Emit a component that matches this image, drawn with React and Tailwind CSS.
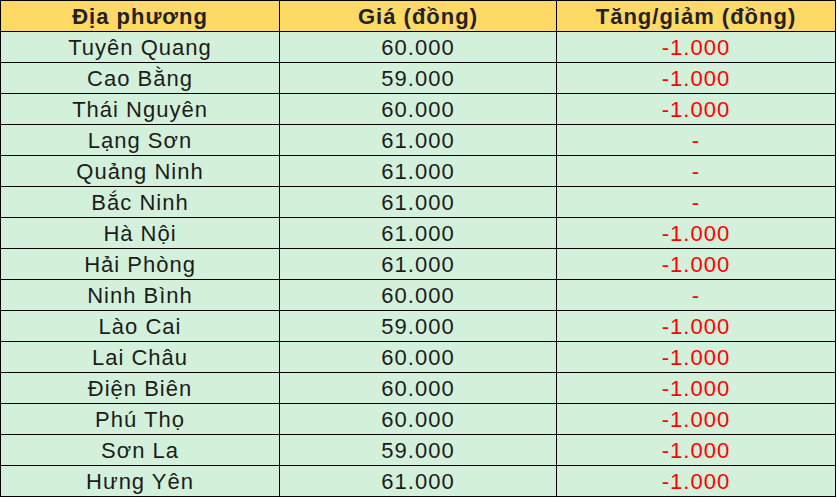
import React from 'react';

const rows = [
  ['Tuyên Quang', '60.000', '-1.000'],
  ['Cao Bằng', '59.000', '-1.000'],
  ['Thái Nguyên', '60.000', '-1.000'],
  ['Lạng Sơn', '61.000', '-'],
  ['Quảng Ninh', '61.000', '-'],
  ['Bắc Ninh', '61.000', '-'],
  ['Hà Nội', '61.000', '-1.000'],
  ['Hải Phòng', '61.000', '-1.000'],
  ['Ninh Bình', '60.000', '-'],
  ['Lào Cai', '59.000', '-1.000'],
  ['Lai Châu', '60.000', '-1.000'],
  ['Điện Biên', '60.000', '-1.000'],
  ['Phú Thọ', '60.000', '-1.000'],
  ['Sơn La', '59.000', '-1.000'],
  ['Hưng Yên', '61.000', '-1.000'],
];

const cell = 'h-[31px] border-r border-b border-black flex items-center justify-center';

export default function App() {
  return (
    <div className="w-[837px] h-[498px] bg-white font-['Liberation_Sans',Arial,sans-serif] text-[22px] tracking-[1px]">
      <div className="w-[836px] border-l border-t border-black">
        {/* header */}
        <div className="grid grid-cols-[279px_277px_279px] bg-[#ffd966] font-bold text-[#222222]">
          <div className={cell}>Địa phương</div>
          <div className={cell}>Giá (đồng)</div>
          <div className={cell}>Tăng/giảm (đồng)</div>
        </div>
        {rows.map(([name, price, diff]) => (
          <div key={name} className="grid grid-cols-[279px_277px_279px] bg-[#d3f0da] text-[#1c1c1c]">
            <div className={cell}>{name}</div>
            <div className={cell}>{price}</div>
            <div className={`${cell} text-[#ff0000]`}>{diff}</div>
          </div>
        ))}
      </div>
    </div>
  );
}
